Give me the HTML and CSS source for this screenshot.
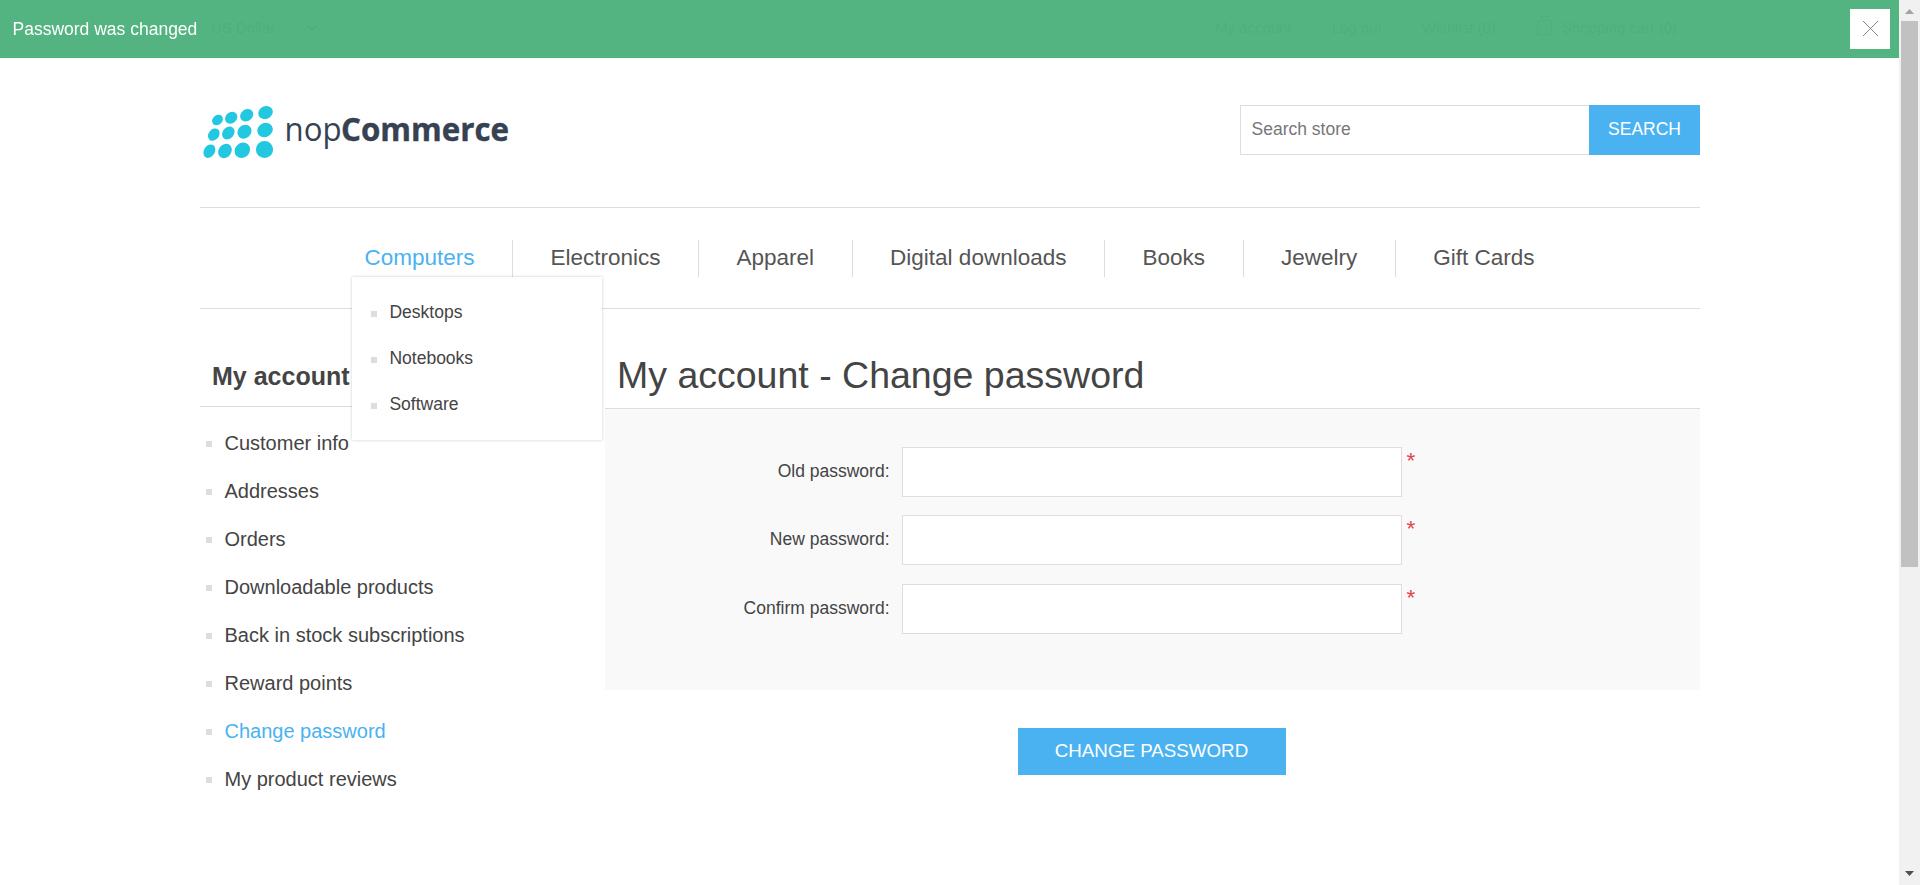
FILE: index.html
```html
<!DOCTYPE html>
<html lang="en">
<head>
<meta charset="utf-8">
<title>nopCommerce - Change password</title>
<link rel="stylesheet" href="styles.css">
</head>
<body>
<div class="notification">
  <p class="notification-text">Password was changed</p>
  <button class="notification-close" aria-label="Close"><svg width="15" height="15" viewBox="0 0 15 15"><path d="M0 0L15 15M15 0L0 15"/></svg></button>
</div>
<div class="page">
  <div class="wrapper">
    <div class="topbar">
      <div class="currency">US Dollar<svg width="12" height="8" viewBox="0 0 12 8"><path d="M1 1l5 5 5-5"/></svg></div>
      <nav class="header-links">
        <a>My account</a><a>Log out</a><a>Wishlist (0)</a>
        <a class="cart"><svg width="17" height="21" viewBox="0 0 17 21"><path d="M2.500 5.500h12l1.500 13q0 1.500-1.500 1.500h-12q-1.500 0-1.500-1.500zM5.500 5V2.500q0-1.500 3-1.500t3 1.500V5"/></svg>Shopping cart (0)</a>
      </nav>
    </div>
    <header class="header">
      <svg class="logo" width="330" height="66" viewBox="0 0 330 66">
        <g class="logo-dots">
          <ellipse cx="17.500" cy="20" rx="5.900" ry="4.800" transform="rotate(-42 17.500 20)"/>
          <ellipse cx="31.200" cy="17.800" rx="6.600" ry="5.500" transform="rotate(-40 31.200 17.800)"/>
          <ellipse cx="46.700" cy="15.200" rx="7" ry="5.800" transform="rotate(-35 46.700 15.200)"/>
          <ellipse cx="65.500" cy="12.500" rx="7.500" ry="6.300" transform="rotate(-25 65.500 12.500)"/>
          <ellipse cx="13.800" cy="34.600" rx="6.700" ry="5.200" transform="rotate(-52 13.800 34.600)"/>
          <ellipse cx="28.300" cy="33" rx="6.900" ry="5.700" transform="rotate(-48 28.300 33)"/>
          <ellipse cx="44.500" cy="31.700" rx="7.500" ry="6.500" transform="rotate(-42 44.500 31.700)"/>
          <ellipse cx="65" cy="30" rx="8" ry="7" transform="rotate(-30 65 30)"/>
          <ellipse cx="9.400" cy="51.200" rx="7.200" ry="5.400" transform="rotate(-58 9.400 51.200)"/>
          <ellipse cx="25" cy="51" rx="7.700" ry="6.300" transform="rotate(-52 25 51)"/>
          <ellipse cx="42.300" cy="50.300" rx="8.200" ry="7.300" transform="rotate(-45 42.300 50.300)"/>
          <ellipse cx="64.500" cy="49.500" rx="8.600" ry="8.400"/>
        </g>
        <text class="logo-light" x="84.500" y="40.500" textLength="57" lengthAdjust="spacingAndGlyphs">nop</text>
        <text class="logo-bold" x="141" y="40.500" textLength="168" lengthAdjust="spacingAndGlyphs">Commerce</text>
      </svg>
      <form class="search">
        <input class="search-input" type="text" placeholder="Search store">
        <button class="search-button" type="button">SEARCH</button>
      </form>
    </header>
    <nav class="menu">
      <div class="menu-item active">Computers
        <ul class="submenu"><li>Desktops</li><li>Notebooks</li><li>Software</li></ul>
      </div>
      <div class="menu-item">Electronics</div>
      <div class="menu-item">Apparel</div>
      <div class="menu-item">Digital downloads</div>
      <div class="menu-item">Books</div>
      <div class="menu-item">Jewelry</div>
      <div class="menu-item">Gift Cards</div>
    </nav>
    <div class="columns">
      <aside class="sidebar">
        <h2 class="sidebar-title">My account</h2>
        <ul class="sidebar-list">
          <li>Customer info</li>
          <li>Addresses</li>
          <li>Orders</li>
          <li>Downloadable products</li>
          <li>Back in stock subscriptions</li>
          <li>Reward points</li>
          <li class="current">Change password</li>
          <li>My product reviews</li>
        </ul>
      </aside>
      <main class="main">
        <h1 class="page-title">My account - Change password</h1>
        <div class="fieldset">
          <div class="field"><label for="old">Old password:</label><input id="old" type="password"><span class="required">*</span></div>
          <div class="field"><label for="new">New password:</label><input id="new" type="password"><span class="required">*</span></div>
          <div class="field last"><label for="confirm">Confirm password:</label><input id="confirm" type="password"><span class="required">*</span></div>
        </div>
        <button class="submit">CHANGE PASSWORD</button>
      </main>
    </div>
  </div>
</div>
<div class="scrollbar">
  <svg width="9" height="5" viewBox="0 0 9 5"><path d="M0 5L4.500 0L9 5z" fill="#a3a3a3"/></svg>
  <div class="thumb"></div>
  <svg class="down" width="9" height="5" viewBox="0 0 9 5"><path d="M0 0h9L4.500 5z" fill="#505050"/></svg>
</div>
</body>
</html>
```
FILE: styles.css
```css
* { box-sizing: border-box; margin: 0; padding: 0; }
body { height: 885px; overflow: hidden; background: #fff; color: #444; font: 17.5px "Liberation Sans", Arial, sans-serif; }
ul { list-style: none; }
button { border: 0; font-family: inherit; }
input { border: 1px solid #ddd; background: #fff; font-family: inherit; }

.notification { position: fixed; z-index: 10; top: 0; left: 0; width: 1899px; height: 58px; padding: 0 9px 0 12.5px; display: flex; align-items: center; justify-content: space-between; background: rgba(75, 176, 122, .95); }
.notification-text { color: #fff; }
.notification-close { width: 40px; height: 40px; display: flex; align-items: center; justify-content: center; background: #fff; }
.notification-close svg { margin-top: -1px; }
.notification-close path { stroke: #888; stroke-width: 1; }

.page { width: 1899px; }
.wrapper { width: 1500px; margin-left: 200px; }

.topbar { height: 55px; display: flex; align-items: center; justify-content: space-between; font-size: 15px; color: #888; }
.currency { width: 125px; height: 31px; padding: 0 6px 0 10px; border: 1px solid #ddd; display: flex; align-items: center; justify-content: space-between; }
.topbar svg { fill: none; stroke: #999; stroke-width: 1.5; }
.header-links { display: flex; align-items: center; gap: 40px; padding-right: 23px; }
.cart { display: flex; align-items: center; gap: 9px; }
.cart svg { margin-top: -4px; stroke-width: 1.2; }

.header { height: 152px; display: flex; align-items: flex-start; justify-content: space-between; padding-top: 45px; }
.logo { flex: none; }
.logo-dots { fill: #22c7e0; }
.logo-light, .logo-bold { font-family: "Open Sans", "Noto Sans", sans-serif; font-size: 33px; fill: #364152; }
.logo-bold { font-weight: 700; stroke: #364152; stroke-width: .4; }
.search { display: flex; margin-top: 5px; }
.search-input { width: 349px; height: 50px; padding: 0 10.5px 2px; border-right: 0; font-size: 17.5px; }
.search-input::placeholder { color: #777; }
.search-button { width: 111px; height: 50px; padding-bottom: 2px; background: #4ab2f1; color: #fff; font-size: 17.5px; }

.menu { height: 102px; display: flex; justify-content: center; align-items: flex-start; padding-top: 32px; border-top: 1px solid #ddd; border-bottom: 1px solid #ddd; }
.menu-item { position: relative; height: 37px; padding: 0 37.5px; border-left: 1px solid #ddd; font-size: 22.5px; line-height: 36px; color: #555; white-space: nowrap; }
.menu-item:first-child { border-left: 0; margin-left: -1px; }
.menu-item.active { color: #4ab2f1; }
.submenu { position: absolute; z-index: 2; top: 37px; left: 25px; width: 250px; height: 163px; padding: 12px 19px; background: #fff; box-shadow: 0 0 3px rgba(0, 0, 0, .2); color: #444; font-size: 17.5px; }
.submenu li { height: 46px; line-height: 46px; display: flex; align-items: center; gap: 12.5px; }
.submenu li::before { content: ""; width: 6px; height: 6px; margin-top: 4px; background: #ddd; }

.columns { display: flex; justify-content: space-between; }
.sidebar { width: 345px; padding-top: 49px; }
.sidebar-title { height: 49px; padding-left: 12px; border-bottom: 1px solid #ddd; font-size: 25px; line-height: 36px; }
.sidebar-list { padding: 12px 0 0 6px; }
.sidebar-list li { height: 48px; display: flex; align-items: center; gap: 12.5px; font-size: 20px; }
.sidebar-list li::before { content: ""; width: 6px; height: 6px; margin-top: 2px; background: #ddd; }
.sidebar-list .current { color: #4ab2f1; }

.main { width: 1095px; display: flex; flex-direction: column; align-items: center; }
.page-title { width: 100%; height: 100px; padding: 45px 0 0 12px; border-bottom: 1px solid #ddd; font-size: 37.5px; font-weight: 400; line-height: 43px; }
.fieldset { width: 100%; height: 281px; padding-top: 38px; background: #f9f9f9; display: flex; flex-direction: column; gap: 18px; }
.field { height: 50px; display: flex; align-items: flex-start; }
.field.last { margin-top: 1px; }
.field label { width: 297px; padding-right: 12.5px; line-height: 49px; text-align: right; }
.field input { width: 500px; height: 50px; }
.required { margin-left: 4.5px; font-size: 22.5px; line-height: 27px; color: #e4434b; }
.submit { width: 268px; height: 47px; margin: 38px 2px 0 0; padding-bottom: 2px; background: #4ab2f1; color: #fff; font-size: 18.75px; }

.scrollbar { position: fixed; z-index: 11; top: 0; right: 0; width: 21px; height: 885px; padding: 9px 0; display: flex; flex-direction: column; align-items: center; background: #f1f1f1; }
.thumb { width: 17px; height: 546px; margin-top: 7px; background: #c1c1c1; }
.scrollbar .down { margin-top: auto; }
```
